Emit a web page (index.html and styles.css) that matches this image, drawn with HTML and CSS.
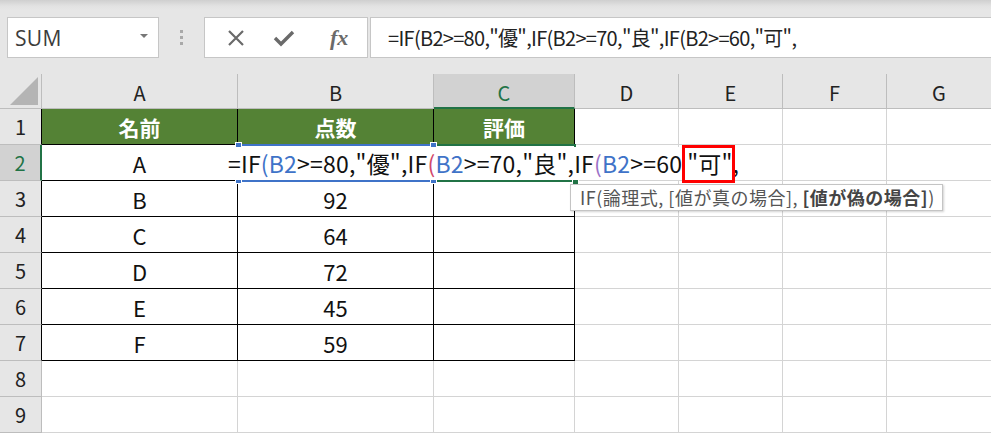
FILE: index.html
```html
<!DOCTYPE html>
<html lang="ja">
<head>
<meta charset="utf-8">
<link rel="stylesheet" href="styles.css">
</head>
<body>
<div class="app">
  <div class="toolbar">
    <div class="namebox"><span class="name">SUM</span><span class="caret"></span></div>
    <div class="dots"><i></i><i></i><i></i></div>
    <div class="btns">
      <svg class="ico" width="20" height="20" viewBox="0 0 20 20"><path d="M3 3 L17 17 M17 3 L3 17" stroke="#6a6a6a" stroke-width="2.2" fill="none"/></svg>
      <svg class="ico" width="22" height="20" viewBox="0 0 22 20"><path d="M2 10 L8 16 L20 4" stroke="#6a6a6a" stroke-width="3.4" fill="none" stroke-linejoin="miter"/></svg>
      <span class="fx">fx</span>
    </div>
    <div class="fbar">=IF(B2&gt;=80,"優",IF(B2&gt;=70,"良",IF(B2&gt;=60,"可",</div>
  </div>
  <div class="sheet">
    <div class="grid">
      <div class="corner"><span class="tri"></span></div>
      <div class="ch">A</div><div class="ch">B</div><div class="ch sel">C</div><div class="ch">D</div><div class="ch">E</div><div class="ch">F</div><div class="ch last">G</div>

      <div class="rh tb">1</div>
      <div class="c hd ta">名前</div><div class="c hd">点数</div><div class="c hd">評価</div><div class="c"></div><div class="c"></div><div class="c"></div><div class="c last"></div>

      <div class="rh tb act">2</div>
      <div class="c t ta">A</div><div class="c t"></div><div class="c t"></div><div class="c"></div><div class="c"></div><div class="c"></div><div class="c last"></div>

      <div class="rh tb">3</div>
      <div class="c t ta">B</div><div class="c t">92</div><div class="c t"></div><div class="c"></div><div class="c"></div><div class="c"></div><div class="c last"></div>

      <div class="rh tb">4</div>
      <div class="c t ta">C</div><div class="c t">64</div><div class="c t"></div><div class="c"></div><div class="c"></div><div class="c"></div><div class="c last"></div>

      <div class="rh tb">5</div>
      <div class="c t ta">D</div><div class="c t">72</div><div class="c t"></div><div class="c"></div><div class="c"></div><div class="c"></div><div class="c last"></div>

      <div class="rh tb">6</div>
      <div class="c t ta">E</div><div class="c t">45</div><div class="c t"></div><div class="c"></div><div class="c"></div><div class="c"></div><div class="c last"></div>

      <div class="rh tb">7</div>
      <div class="c t ta">F</div><div class="c t">59</div><div class="c t"></div><div class="c"></div><div class="c"></div><div class="c"></div><div class="c last"></div>

      <div class="rh">8</div>
      <div class="c"></div><div class="c"></div><div class="c"></div><div class="c"></div><div class="c"></div><div class="c"></div><div class="c last"></div>

      <div class="rh">9</div>
      <div class="c"></div><div class="c"></div><div class="c"></div><div class="c"></div><div class="c"></div><div class="c"></div><div class="c last"></div>
    </div>

    <div class="active-box"><span class="h hbr"></span></div>
    <div class="ref-box"><span class="h h1"></span><span class="h h2"></span><span class="h h3"></span><span class="h h4"></span></div>
    <div class="edit">=IF<span class="p1">(</span><span class="r">B2</span>&gt;=80,"優",IF<span class="p2">(</span><span class="r">B2</span>&gt;=70,"良",IF<span class="p3">(</span><span class="r">B2</span>&gt;=60<span class="hl">"可",</span></div>
    <div class="redbox"></div>
    <div class="tip">IF(論理式, [値が真の場合], <b>[値が偽の場合]</b>)</div>
  </div>
</div>
</body>
</html>
```
FILE: styles.css
```css
* { box-sizing: border-box; }
html, body { margin: 0; padding: 0; }
body {
  width: 991px;
  height: 434px;
  overflow: hidden;
  background: #ffffff;
  font-family: "Noto Sans CJK JP", "Noto Sans", sans-serif;
}
.app { width: 991px; height: 434px; overflow: hidden; }

/* toolbar */
.toolbar {
  height: 74px;
  background: linear-gradient(#cfcfcf 0px, #e2e2e2 6px, #e6e6e6 10px);
  display: flex;
  align-items: flex-start;
  padding-top: 17px;
  padding-left: 7px;
}
.namebox {
  width: 152px;
  height: 41px;
  background: #fff;
  border: 1px solid #c6c6c6;
  display: flex;
  align-items: center;
  justify-content: space-between;
  padding: 0 10px 0 7px;
}
.name {
  font-family: "Open Sans", "Noto Sans", sans-serif;
  font-size: 21px;
  color: #3c3c3c;
  letter-spacing: 0.3px;
}
.caret {
  width: 0; height: 0;
  border-left: 4px solid transparent;
  border-right: 4px solid transparent;
  border-top: 4px solid #777;
  margin-top: -4px;
}
.dots {
  width: 45px;
  height: 41px;
  display: flex;
  flex-direction: column;
  align-items: center;
  justify-content: center;
  gap: 3px;
}
.dots i { display: block; width: 3px; height: 3px; background: #a9a9a9; }
.btns {
  width: 164px;
  height: 41px;
  background: #fff;
  border: 1px solid #c6c6c6;
  display: flex;
  align-items: center;
  padding-left: 21px;
  gap: 27px;
}
.fx {
  font-family: "Liberation Serif", serif;
  font-style: italic;
  font-weight: 700;
  font-size: 22px;
  color: #6a6a6a;
  margin-left: 8px;
}
.fbar {
  margin-left: 2px;
  flex: 1;
  height: 41px;
  background: #fff;
  border: 1px solid #c6c6c6;
  border-right: none;
  padding-left: 17px;
  font-size: 20px;
  line-height: 39px;
  color: #222;
  letter-spacing: -0.7px;
  white-space: nowrap;
}

/* sheet */
.sheet { position: relative; }
.grid {
  display: grid;
  grid-template-columns: 42px 196px 196px 141px 104px 104px 104px 104px;
  grid-template-rows: 35px repeat(9, 36px);
}
.corner {
  background: #e6e6e6;
  border-right: 1px solid #bdbdbd;
  border-bottom: 1px solid #bdbdbd;
  position: relative;
}
.tri {
  position: absolute;
  right: 3px;
  bottom: 3px;
  width: 0; height: 0;
  border-left: 28px solid transparent;
  border-bottom: 28px solid #b4b4b4;
}
.ch {
  background: #e6e6e6;
  border-bottom: 1px solid #bdbdbd;
  border-right: 1px solid #bdbdbd;
  display: flex;
  align-items: center;
  justify-content: center;
  font-size: 20px;
  color: #222;
  padding-top: 2px;
}
.ch.last { border-right: none; }
.ch.sel {
  background: #d2d2d2;
  color: #217346;
  border-bottom: 2px solid #217346;
  padding-top: 3px;
}
.rh {
  background: #e6e6e6;
  border-bottom: 1px solid #bdbdbd;
  border-right: 1px solid #bdbdbd;
  display: flex;
  align-items: center;
  justify-content: center;
  font-size: 20px;
  color: #222;
}
.rh.tb { border-right-color: #000; }
.rh.act {
  background: #d2d2d2;
  color: #217346;
  border-right: 2px solid #217346;
}
.c {
  border-right: 1px solid #d4d4d4;
  border-bottom: 1px solid #d4d4d4;
  display: flex;
  align-items: center;
  justify-content: center;
  font-size: 22px;
  color: #111;
}
.c.last { border-right: none; }
.c.t, .c.hd { border-right-color: #000; border-bottom-color: #000; }
.c.hd {
  background: #548235;
  color: #fff;
  font-weight: 700;
  font-size: 21px;
}

/* overlays */
.active-box {
  position: absolute;
  left: 433px;
  top: 70px;
  width: 143px;
  height: 38px;
  border: 2px solid #217346;
}
.ref-box {
  position: absolute;
  left: 237px;
  top: 70px;
  width: 198px;
  height: 38px;
  border: 2px solid #3f73c8;
}
.h {
  position: absolute;
  width: 7px;
  height: 7px;
  border: 1px solid #fff;
  background: #3f73c8;
}
.h1 { left: -4px; top: -4px; }
.h2 { right: -4px; top: -4px; }
.h3 { left: -4px; bottom: -4px; }
.h4 { right: -4px; bottom: -4px; }
.hbr { right: -5px; bottom: -5px; background: #217346; }
.edit {
  position: absolute;
  left: 225px;
  top: 73px;
  width: 525px;
  height: 33px;
  background: #fff;
  font-size: 23px;
  line-height: 33px;
  color: #111;
  white-space: nowrap;
  padding-left: 3px;
  letter-spacing: 0.2px;
}
.r, .p1 { color: #3f73c8; }
.p2 { color: #d2476a; }
.p3 { color: #9b72c8; }
.hl { margin-left: 5px; }
.redbox {
  position: absolute;
  left: 682px;
  top: 71px;
  width: 53px;
  height: 38px;
  border: 3px solid #ff0000;
}
.tip {
  position: absolute;
  left: 570px;
  top: 110px;
  width: 373px;
  height: 27px;
  background: #fff;
  border: 1px solid #c4c4c4;
  box-shadow: 1px 1px 2px rgba(0,0,0,0.18);
  font-size: 18px;
  line-height: 25px;
  color: #555;
  padding-left: 9px;
  white-space: nowrap;
  letter-spacing: 0.5px;
}
.tip b { color: #444; }
```
